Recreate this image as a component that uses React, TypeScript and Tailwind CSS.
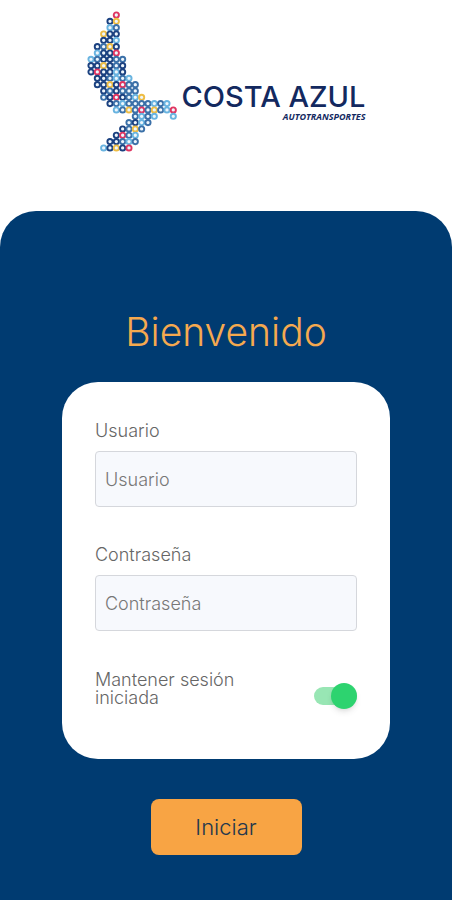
import { useState } from 'react';

const DOT_COLORS: Record<string, string> = {
  n: '#1b4180',
  b: '#3b70a8',
  l: '#69b4e0',
  y: '#eebd45',
  r: '#df3561',
};

// one character per dot, a space leaves the cell empty
const BIRD_ROWS = [
  '    r',
  '   ny',
  '   lb',
  '  ynn',
  '  nnl',
  ' nbyn',
  ' lnnr',
  'lbnnbb',
  'nnynbn',
  'nrnnln',
  ' nnblbl',
  ' nnynrbb',
  '  nbnbbb',
  '  bnrnbly',
  '   nblbbbblbl',
  '    lbybrbyblr',
  '       blbl  l',
  '      bnlb',
  '     nbyb',
  '    nrbl',
  '   nnblb',
  '  lnynr',
];

const Bird = () => (
  <svg viewBox="0 0 91 141" className="h-[141px] w-[91px] shrink-0" aria-hidden="true">
    {BIRD_ROWS.map((row, y) =>
      [...row].map((dot, x) =>
        dot === ' ' ? null : (
          <circle
            key={`${x}-${y}`}
            cx={4 + x * 6.33}
            cy={4 + y * 6.33}
            r="2.6"
            fill="#eef6fc"
            stroke={DOT_COLORS[dot]}
            strokeWidth="1.9"
          />
        ),
      ),
    )}
  </svg>
);

type FieldProps = {
  id: string;
  label: string;
  type: string;
};

const Field = ({ id, label, type }: FieldProps) => (
  <div className="flex flex-col gap-2">
    <label htmlFor={id} className="text-[18px] leading-6">
      {label}
    </label>
    <input
      id={id}
      type={type}
      placeholder={label}
      className="h-14 w-full rounded-sm border border-[#d5d7dc] bg-[#f7f9fd] px-[9px] text-[18px] font-light outline-none placeholder:text-[#777777]"
    />
  </div>
);

export default function App() {
  const [keepSession, setKeepSession] = useState(true);

  return (
    <div className="flex min-h-screen flex-col bg-white font-['Inter','Liberation_Sans',sans-serif] font-light">
      <header className="flex justify-center gap-1 pt-[11px] pb-[59px]">
        <Bird />
        <div className="flex flex-col items-end pt-[70px] text-[#13295f]">
          <span className="text-[29px] leading-8 font-medium">COSTA AZUL</span>
          <span className="font-['Open_Sans',sans-serif] text-[9px] leading-2 font-bold italic">AUTOTRANSPORTES</span>
        </div>
      </header>
      <main className="flex flex-1 flex-col items-center rounded-t-[36px] bg-[#003b71] px-[62px] pt-[99px] pb-11">
        <h1 className="text-[39px] leading-11 text-[#f5a94f]">Bienvenido</h1>
        <form className="mt-7 flex w-full flex-col items-center gap-10" onSubmit={(e) => e.preventDefault()}>
          <div className="flex w-full flex-col gap-9 rounded-[36px] bg-white px-[33px] pt-[37px] pb-[52px] text-[#666666]">
            <Field id="user" label="Usuario" type="text" />
            <Field id="password" label="Contraseña" type="password" />
            <div className="mt-1 flex items-start justify-between">
              <label htmlFor="keep" className="w-[150px] text-[18px] leading-[18px]">
                Mantener sesión iniciada
              </label>
              <input
                id="keep"
                type="checkbox"
                role="switch"
                checked={keepSession}
                onChange={(e) => setKeepSession(e.target.checked)}
                className="mt-4 flex h-[18px] w-[43px] appearance-none items-center rounded-full bg-gray-300 before:size-[26px] before:shrink-0 before:rounded-full before:bg-white before:shadow-md checked:justify-end checked:bg-[#98e6b4] checked:before:bg-[#2dd36f]"
              />
            </div>
          </div>
          <button type="submit" className="h-14 w-[151px] rounded-lg bg-[#f8a444] text-[22px] text-[#24384d]">
            Iniciar
          </button>
        </form>
      </main>
    </div>
  );
}
